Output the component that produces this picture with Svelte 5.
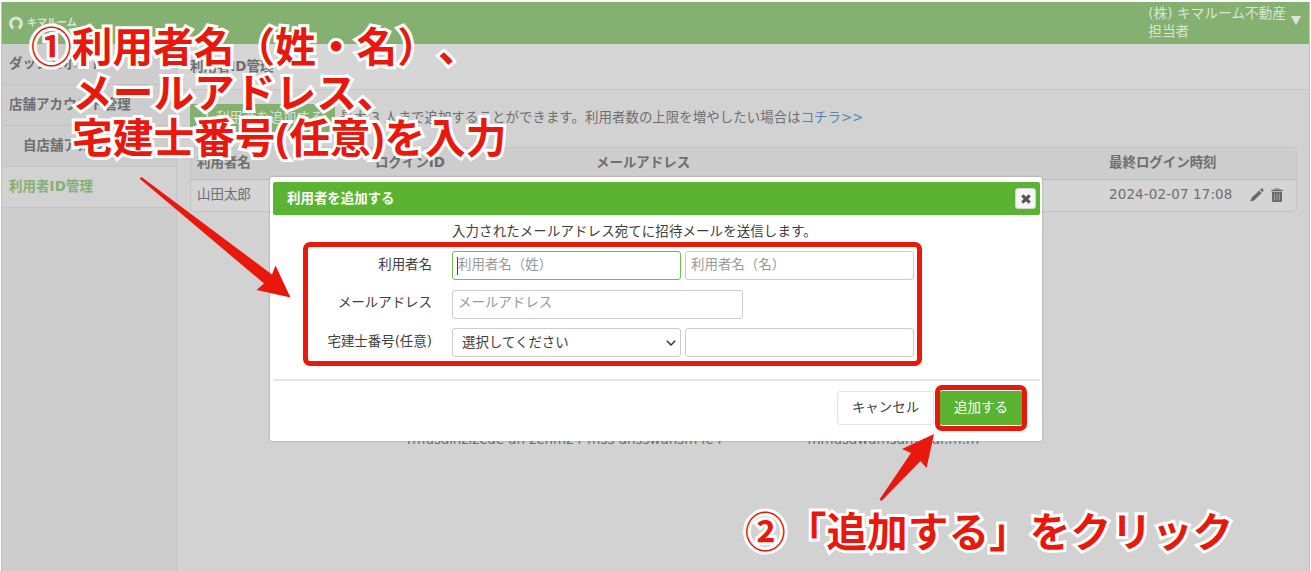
<script lang="ts">
	const navItems = [
		{ label: 'ダッシュボード' },
		{ label: '店舗アカウント管理' },
		{ label: '自店舗アカウント', child: true },
		{ label: '利用者ID管理', active: true }
	];

	const users = [{ name: '山田太郎', loginId: '', email: '', lastLogin: '2024-02-07 17:08' }];

	let lastName = $state('');
	let firstName = $state('');
	let email = $state('');
	let prefecture = $state('');
	let licenseNumber = $state('');
</script>

<div class="screen">
	<div class="page">
		<header class="topbar">
			<div class="logo">
				<svg width="14" height="14" viewBox="0 0 14 14" aria-hidden="true">
					<path d="M4.4 12.1A5.4 5.4 0 1 1 9.6 12.1" fill="none" stroke="currentColor" stroke-width="3" />
				</svg>
				<span>キマルーム</span>
			</div>
			<div class="account">
				<span class="account-name">(株) キマルーム不動産<br />担当者</span>
				<span class="caret-down"></span>
			</div>
		</header>

		<div class="body">
			<nav class="sidebar">
				{#each navItems as item}
					<a class="nav-item" class:child={item.child} class:active={item.active}>{item.label}</a>
				{/each}
			</nav>

			<main class="main">
				<h1 class="title">利用者ID管理</h1>
				<div class="content">
					<div class="actions">
						<button class="add-user"><span class="plus">+</span>利用者を追加する</button>
						<p>最大 3 人まで追加することができます。利用者数の上限を増やしたい場合は<a class="link">コチラ&gt;&gt;</a></p>
					</div>
					<div class="table">
						<div class="row head">
							<span>利用者名</span>
							<span>ログインID</span>
							<span>メールアドレス</span>
							<span>最終ログイン時刻</span>
						</div>
						{#each users as user}
							<div class="row">
								<span>{user.name}</span>
								<span>{user.loginId}</span>
								<span>{user.email}</span>
								<span class="date">{user.lastLogin}</span>
								<span class="icons">
									<svg width="14" height="14" viewBox="0 0 14 14" aria-label="編集">
										<path d="M0.4 13.6 1.4 10 9.2 2.4 11.8 5 4 12.6ZM10 1.7 11.2.6Q11.8 0 12.4.6L13.5 1.7Q14 2.3 13.4 2.9L12.4 4.1Z" />
									</svg>
									<svg width="12" height="14" viewBox="0 0 12 14" aria-label="削除">
										<path d="M0.3 1.7H3.6V.4H8.4V1.7H11.7V3.2H.3ZM4.6 1.2V1.8H7.4V1.2Z" fill-rule="evenodd" />
										<path d="M1 4H11V13Q11 14 10 14H2Q1 14 1 13Z" />
										<path d="M3.5 5.5V12.3M6 5.5V12.3M8.5 5.5V12.3" stroke="#b4b4b4" stroke-width=".7" />
									</svg>
								</span>
							</div>
						{/each}
					</div>
				</div>
			</main>
		</div>
	</div>

	<div class="behind" aria-hidden="true">
		<span>rmusainzizeae an zenmz r mss ansswansm ie r</span>
		<span>mmusawamsamarar.m.m</span>
	</div>

	<section class="modal">
		<div class="modal-head">
			<h2>利用者を追加する</h2>
			<button class="close" aria-label="閉じる">
				<svg width="10" height="10" viewBox="0 0 10 10">
					<path d="M1.3 1.3 8.7 8.7M8.7 1.3 1.3 8.7" stroke="currentColor" stroke-width="3.1" />
				</svg>
			</button>
		</div>
		<div class="modal-body">
			<p class="lead">入力されたメールアドレス宛てに招待メールを送信します。</p>
			<div class="field">
				<label for="last-name">利用者名</label>
				<div class="focus-wrap">
					<input id="last-name" class="focused" placeholder="利用者名（姓）" bind:value={lastName} />
					<i class="text-caret"></i>
				</div>
				<input placeholder="利用者名（名）" bind:value={firstName} />
			</div>
			<div class="field">
				<label for="email">メールアドレス</label>
				<input id="email" class="wide" placeholder="メールアドレス" bind:value={email} />
			</div>
			<div class="field">
				<label for="prefecture">宅建士番号(任意)</label>
				<div class="select-wrap">
					<select id="prefecture" bind:value={prefecture}>
						<option value="">選択してください</option>
					</select>
					<svg width="10" height="6" viewBox="0 0 10 6" aria-hidden="true">
						<path d="M.8.8 5 5 9.2.8" fill="none" stroke="#333" stroke-width="1.5" />
					</svg>
				</div>
				<input bind:value={licenseNumber} />
			</div>
		</div>
		<div class="modal-foot">
			<button class="cancel">キャンセル</button>
			<button class="submit">追加する</button>
		</div>
	</section>

	<div class="frame frame-form"></div>
	<div class="frame frame-submit"></div>
	<svg class="arrows" width="1311" height="571" viewBox="0 0 1311 571" aria-hidden="true">
		<path d="M139.5 178.5 141.5 177 272 274.5 275.5 265.5 290.5 297.5 256.5 290 264 283.5Z" />
		<path d="M879.5 499.5 911 453 902 449 934 434 926.5 468 920.5 461 881.5 501Z" />
	</svg>
	<div class="note note-form">
		<span>①利用者名（姓・名）、</span>
		<span class="indent">メールアドレス、</span>
		<span class="indent">宅建士番号(任意)を入力</span>
	</div>
	<div class="note note-submit">②「追加する」をクリック</div>
</div>

<style>
	:global(body) {
		margin: 0;
		background: #fff;
	}

	.screen {
		position: relative;
		box-sizing: border-box;
		width: 1311px;
		height: 571px;
		padding: 2px 1px 0 1px;
		overflow: hidden;
		color: #6e6e6e;
		font-family: 'DejaVu Sans', 'Noto Sans CJK JP', sans-serif;
		font-size: 13.45px;
		line-height: 18px;
		text-spacing-trim: space-all;
	}

	.screen * {
		box-sizing: border-box;
	}

	.page {
		display: flex;
		flex-direction: column;
		height: 569px;
		border: solid #c2c2c2;
		border-width: 0 1px;
		background: #d2d2d2;
	}

	.topbar {
		display: flex;
		justify-content: space-between;
		flex: none;
		height: 42px;
		padding: 0 8px 0 7px;
		background: #84b070;
		color: #dce4d8;
	}

	.logo {
		display: flex;
		align-items: center;
		gap: 4px;
		font-size: 10px;
		font-weight: 700;
	}

	.account {
		display: flex;
		align-items: flex-start;
		gap: 5px;
		padding-top: 2px;
		font-size: 13.7px;
		white-space: nowrap;
	}

	.caret-down {
		margin-top: 12px;
		border: solid transparent;
		border-width: 9px 5px 0;
		border-top-color: #dce4d8;
	}

	.body {
		display: flex;
		flex: 1;
	}

	.sidebar {
		flex: none;
		width: 175px;
		border-right: 1px solid #c6c6c6;
		background: #cdcdcd;
	}

	.nav-item {
		display: block;
		height: 41px;
		padding: 11px 7px 0;
		border-bottom: 1px solid #c3c3c3;
		font-weight: 700;
		letter-spacing: 0.1px;
		white-space: nowrap;
	}

	.nav-item.child {
		padding-left: 21px;
	}

	.nav-item.active {
		background: #d2d2d2;
		color: #84b070;
	}

	.main {
		flex: 1;
	}

	.title {
		height: 46px;
		margin: 0;
		padding: 14px 13px 0;
		border-bottom: 1px solid #c6c6c6;
		background: #d6d6d6;
		font-size: 13.45px;
		font-weight: 700;
	}

	.content {
		padding: 14px 12px 0 13px;
	}

	.actions {
		display: flex;
		align-items: center;
		gap: 5px;
		height: 28px;
	}

	.actions p {
		margin: 0;
		letter-spacing: 0.04px;
		white-space: nowrap;
	}

	.add-user {
		width: 145px;
		height: 28px;
		padding: 0;
		border: 0;
		background: #84b070;
		color: #d9e2d5;
		font: inherit;
	}

	.plus {
		margin-right: 3px;
		font-weight: 700;
	}

	.link {
		color: #5286b0;
	}

	.table {
		margin-top: 15px;
		border: 1px solid #c3c3c3;
		border-radius: 4px;
		background: #d5d5d5;
	}

	.row {
		display: grid;
		grid-template-columns: 178px 221px 513px 141px auto;
		align-items: center;
		height: 31px;
		padding: 0 0 1px 6px;
		white-space: nowrap;
	}

	.row.head {
		height: 32px;
		border-bottom: 1px solid #c0c0c0;
		background: #cdcdcd;
		font-weight: 700;
	}

	.date {
		letter-spacing: 0.15px;
	}

	.icons {
		display: flex;
		gap: 7px;
		fill: #6a6a6a;
	}

	.behind {
		position: absolute;
		top: 431px;
		left: 407px;
		display: flex;
		width: 572px;
		height: 14px;
		overflow: hidden;
		justify-content: space-between;
		line-height: 18px;
		white-space: nowrap;
	}

	.modal {
		position: absolute;
		top: 177px;
		left: 270px;
		width: 772px;
		height: 264px;
		padding: 5px 2px 0 3px;
		border-radius: 2px;
		background: #fff;
		box-shadow: 0 0 2px rgba(0, 0, 0, 0.35);
		color: #3e3e3e;
	}

	.modal-head {
		display: flex;
		align-items: center;
		justify-content: space-between;
		height: 33px;
		padding: 0 4px 0 14px;
		border-radius: 2px;
		background: #5bb431;
	}

	.modal-head h2 {
		margin: 0;
		color: #fff;
		font-size: 13.45px;
		font-weight: 700;
	}

	.close {
		display: flex;
		align-items: center;
		justify-content: center;
		width: 21px;
		height: 21px;
		padding: 0;
		border: 1px solid #d5d5d5;
		border-radius: 3px;
		background: #f6f6f6;
		color: #555;
	}

	.modal-body {
		height: 166px;
		padding-top: 8px;
		border-bottom: 2px solid #e5e5e5;
	}

	.lead {
		margin: 0 0 10px 179px;
		letter-spacing: 0.12px;
	}

	.field {
		display: flex;
		align-items: center;
		gap: 4px;
		height: 29px;
		margin-bottom: 9.5px;
	}

	.field label {
		width: 159px;
		margin-right: 16px;
		padding-bottom: 2px;
		text-align: right;
		white-space: nowrap;
	}

	.field input,
	.field select {
		display: block;
		width: 229px;
		height: 29px;
		margin: 0;
		padding: 0 5px 3px;
		border: 1px solid #ccc;
		border-radius: 3px;
		outline: none;
		background: #fff;
		color: #3e3e3e;
		font: inherit;
	}

	.field input::placeholder {
		color: #999;
	}

	.field input.focused {
		border-color: #6fbe4b;
	}

	.field input.wide {
		width: 291px;
	}

	.field select {
		padding: 0 9px;
		appearance: none;
	}

	.focus-wrap,
	.select-wrap {
		position: relative;
	}

	.text-caret {
		position: absolute;
		top: 6px;
		left: 5px;
		width: 1px;
		height: 18px;
		background: #444;
	}

	.select-wrap svg {
		position: absolute;
		top: 12px;
		right: 5px;
	}

	.modal-foot {
		display: flex;
		justify-content: flex-end;
		gap: 5px;
		padding: 10px 17px 0 0;
	}

	.modal-foot button {
		height: 34px;
		padding: 0;
		border: 1px solid #e3e3e3;
		border-radius: 3px;
		font: inherit;
	}

	.cancel {
		width: 97px;
		background: #fff;
		color: #3e3e3e;
	}

	.modal-foot .submit {
		width: 84px;
		border-color: #5bb431;
		background: #5bb431;
		color: #fff;
	}

	.frame {
		position: absolute;
		border: 5px solid #e8190c;
		border-radius: 7px;
	}

	.frame-form {
		top: 242px;
		left: 303px;
		width: 619px;
		height: 124px;
	}

	.frame-submit {
		top: 385px;
		left: 935px;
		width: 92px;
		height: 46px;
	}

	.arrows {
		position: absolute;
		top: 0;
		left: 0;
		fill: #e8190c;
	}

	.note {
		position: absolute;
		color: #e8190c;
		font-family: 'Noto Sans', 'Noto Sans CJK JP', sans-serif;
		font-size: 40.7px;
		font-weight: 700;
		line-height: 45.5px;
		white-space: nowrap;
		-webkit-text-stroke: 6px #fff;
		paint-order: stroke fill;
	}

	.note-form {
		top: 24px;
		left: 31px;
		display: flex;
		flex-direction: column;
	}

	.indent {
		padding-left: 41px;
	}

	.note-submit {
		top: 509px;
		left: 745px;
	}
</style>
